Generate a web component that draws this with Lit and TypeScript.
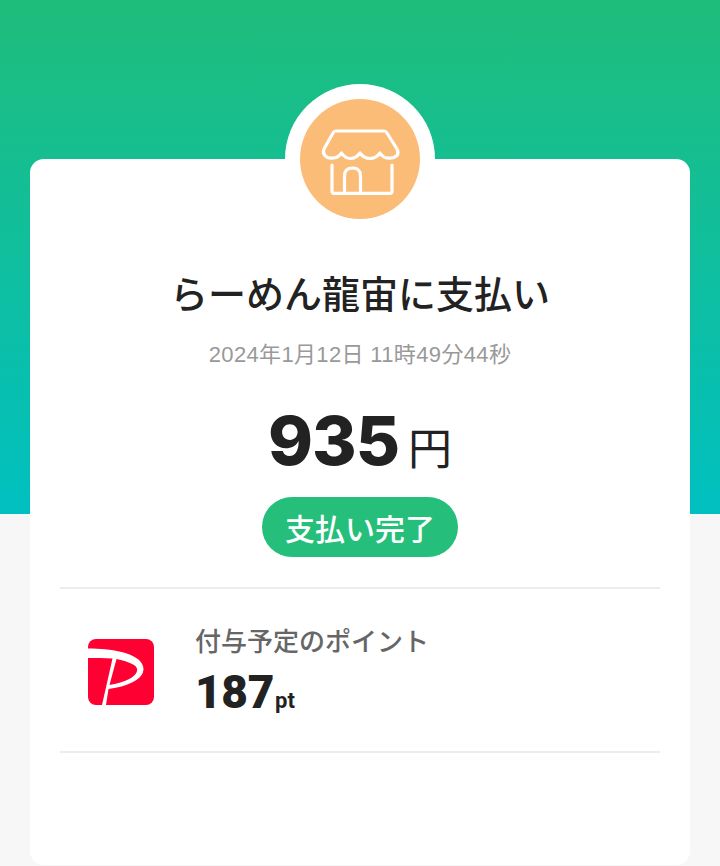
import { LitElement, html, css } from "lit";
import { customElement } from "lit/decorators.js";

@customElement("app-root")
export class AppRoot extends LitElement {
  static styles = css`
    :host {
      display: block;
      height: 866px;
      overflow: hidden;
      background: linear-gradient(180deg, #1fbd7b 0%, #00c0c0 100%) top / 100% 514px no-repeat, #f7f7f7;
      font-family: "Noto Sans CJK JP", sans-serif;
      color: #222;
    }
    .page { padding: 159px 30px 0; }
    .card {
      height: 706px;
      background: #fff;
      border-radius: 14px;
      padding: 0 30px;
      display: flex;
      flex-direction: column;
      align-items: center;
    }
    .ring {
      width: 150px;
      height: 150px;
      margin-top: -75px;
      padding: 15px;
      box-sizing: border-box;
      border-radius: 50%;
      background: #fff;
    }
    .avatar {
      width: 120px;
      height: 120px;
      border-radius: 50%;
      background: #fbbc78;
    }
    .avatar svg { display: block; width: 120px; height: 120px; }
    .title {
      margin-top: 30px;
      font-size: 38px;
      line-height: 56px;
      font-weight: 500;
      white-space: nowrap;
    }
    .date {
      margin-top: 18px;
      font-size: 22px;
      line-height: 34px;
      letter-spacing: 0.35px;
      color: #999;
      font-family: "Liberation Sans", "Noto Sans CJK JP", sans-serif;
      white-space: nowrap;
    }
    .amount {
      margin-top: 26px;
      display: flex;
      align-items: baseline;
      line-height: 84px;
      white-space: nowrap;
    }
    .num {
      font-family: "Inter", sans-serif;
      font-weight: 800;
      font-size: 68px;
      letter-spacing: -1px;
    }
    .yen { font-size: 44px; margin-left: 9px; font-weight: 400; }
    .badge {
      margin-top: 9px;
      width: 196px;
      height: 60px;
      border-radius: 30px;
      background: #25bf7b;
      color: #fff;
      font-size: 30px;
      font-weight: 500;
      display: flex;
      align-items: center;
      justify-content: center;
      white-space: nowrap;
    }
    .row {
      align-self: stretch;
      margin-top: 30px;
      height: 162px;
      border-top: 2px solid #ececec;
      border-bottom: 2px solid #ececec;
      display: flex;
      align-items: center;
      padding-left: 28px;
      gap: 41px;
    }
    .logo { display: block; width: 66px; height: 66px; flex: none; margin-top: 4px; }
    .info { display: flex; flex-direction: column; margin-top: 6px; }
    .label { font-size: 26px; line-height: 36px; color: #666; font-weight: 500; white-space: nowrap; }
    .pts { margin-top: 10px; display: flex; align-items: baseline; line-height: 48px; font-family: "Roboto", sans-serif; font-weight: 700; }
    .pts b { font-size: 46px; letter-spacing: -0.3px; }
    .pts span { font-size: 22px; margin-left: 1px; }
  `;

  render() {
    return html`
      <div class="page">
        <div class="card">
          <div class="ring">
            <div class="avatar">
              <svg viewBox="0 0 120 120" fill="none" stroke="#fff" stroke-width="3.2" stroke-linecap="round" stroke-linejoin="round">
                <path d="M36 32H84Q86 32 87 34L97 50Q99 54 97 56.500Q93 60 88 59Q83 59 80 54Q76 59.500 70 59.500Q64 59.500 60 54Q56 59.500 50.500 59.500Q45 59.500 41.500 54Q38 59 33 59Q28 60 25 56.500Q22.500 54 24 50L33 34Q34 32 36 32Z"/>
                <path d="M32 66V92Q32 94.300 34 94.300H90Q92 94.300 92 92V66"/>
                <path d="M44.500 93V77Q44.500 69 52.500 69Q60.500 69 60.500 77V93"/>
              </svg>
            </div>
          </div>
          <div class="title">らーめん龍宙に支払い</div>
          <div class="date">2024年1月12日 11時49分44秒</div>
          <div class="amount"><span class="num">935</span><span class="yen">円</span></div>
          <div class="badge">支払い完了</div>
          <div class="row">
            <svg class="logo" viewBox="0 0 66 66">
              <rect width="66" height="66" rx="8" fill="#ff0033"/>
              <path fill-rule="evenodd" d="M0 9.500C24 9.500 45 14 52 22C59 30 55 38 45 43C37 47 28 49 20.500 50L18 66H14L24.500 19.500C16 19 8 19 0 19ZM28.500 20L21.500 46C28 45 37 42.500 43 39C50 34.500 51 29 46 26C41 23 34 21 28.500 20Z" fill="#fff"/>
            </svg>
            <div class="info">
              <div class="label">付与予定のポイント</div>
              <div class="pts"><b>187</b><span>pt</span></div>
            </div>
          </div>
        </div>
      </div>
    `;
  }
}
